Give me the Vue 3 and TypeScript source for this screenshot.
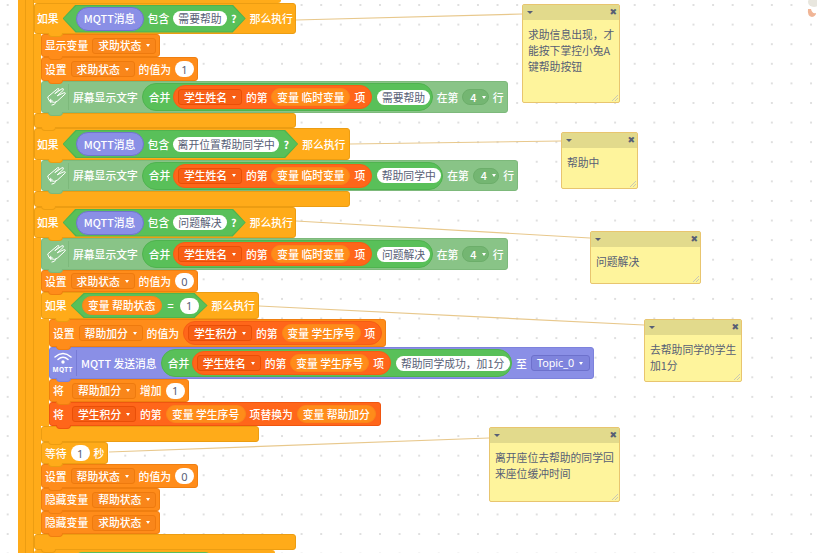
<script setup lang="ts">
interface Note {
  id: string
  lines: string[]
}
const notes: Note[] = [
  { id: 'n1', lines: ['求助信息出现，才', '能按下掌控小兔A', '键帮助按钮'] },
  { id: 'n2', lines: ['帮助中'] },
  { id: 'n3', lines: ['问题解决'] },
  { id: 'n4', lines: ['去帮助同学的学生', '加1分'] },
  { id: 'n5', lines: ['离开座位去帮助的同学回', '来座位缓冲时间'] },
]
const links = [
  [296, 20, 522, 14],
  [350, 144, 561, 141],
  [296, 221, 590, 238],
  [259, 306, 644, 325],
  [109, 452, 489, 438],
]
</script>

<template>
  <div class="canvas">
    <svg class="links" width="817" height="553">
      <line v-for="(l, i) in links" :key="i" :x1="l[0]" :y1="l[1]" :x2="l[2]" :y2="l[3]" />
    </svg>

    <div class="stack">
      <div class="arm outer"></div>
      <div class="arm outer"></div>
      <div class="col">
        <div class="foot prev"></div>

        <div class="b ctl head h31 w262">
          <span>如果</span>
          <div class="hex">
            <span class="pill mqtt">MQTT消息</span><span>包含</span>
            <span class="str w53">需要帮助</span><span class="q">?</span>
          </div>
          <span>那么执行</span>
        </div>
        <div class="body">
          <div class="arm"></div>
          <div class="kids">
            <div class="b var row h23"><span>显示变量</span><span class="dd v w64">求助状态<i></i></span></div>
            <div class="b var row h24"><span>设置</span><span class="dd v w64">求助状态<i></i></span><span>的值为</span><span class="num">1</span></div>
            <div class="b scr row h32">
              <svg class="comet" viewBox="1 0 18 18" width="20" height="20"><path d="M2.500 9 11.500 1.500Q13 1 12.500 2.500L9 6 15.500 1.500Q17 1 16.500 3L11 8 17.500 5Q19 5 18 6.500L11.500 12.500A5.500 5.500 0 0 1 2.500 9ZM3.500 12.500H7M5.250 10.700V14.300M6 16.300Q9 16.300 10 13.500"/></svg>
              <span class="sep"></span><span>屏幕显示文字</span>
              <div class="join">
                <span>合并</span>
                <div class="item">
                  <span class="dd l w64">学生姓名<i></i></span><span>的第</span><span class="vp w79">变量 临时变量</span><span>项</span>
                </div>
                <span class="str w53 end">需要帮助</span>
              </div>
              <span>在第</span><span class="dd g">4<i></i></span><span>行</span>
            </div>
          </div>
        </div>
        <div class="b ctl foot w262 h15"></div>

        <div class="b ctl head h32 w316">
          <span>如果</span>
          <div class="hex">
            <span class="pill mqtt">MQTT消息</span><span>包含</span>
            <span class="str w106">离开位置帮助同学中</span><span class="q">?</span>
          </div>
          <span>那么执行</span>
        </div>
        <div class="body">
          <div class="arm"></div>
          <div class="kids">
            <div class="b scr row h31">
              <svg class="comet" viewBox="1 0 18 18" width="20" height="20"><path d="M2.500 9 11.500 1.500Q13 1 12.500 2.500L9 6 15.500 1.500Q17 1 16.500 3L11 8 17.500 5Q19 5 18 6.500L11.500 12.500A5.500 5.500 0 0 1 2.500 9ZM3.500 12.500H7M5.250 10.700V14.300M6 16.300Q9 16.300 10 13.500"/></svg>
              <span class="sep"></span><span>屏幕显示文字</span>
              <div class="join">
                <span>合并</span>
                <div class="item">
                  <span class="dd l w64">学生姓名<i></i></span><span>的第</span><span class="vp w79">变量 临时变量</span><span>项</span>
                </div>
                <span class="str w64 end">帮助同学中</span>
              </div>
              <span>在第</span><span class="dd g">4<i></i></span><span>行</span>
            </div>
          </div>
        </div>
        <div class="b ctl foot w316 h16"></div>

        <div class="b ctl head h31 w262">
          <span>如果</span>
          <div class="hex">
            <span class="pill mqtt">MQTT消息</span><span>包含</span>
            <span class="str w53">问题解决</span><span class="q">?</span>
          </div>
          <span>那么执行</span>
        </div>
        <div class="body">
          <div class="arm"></div>
          <div class="kids">
            <div class="b scr row h32">
              <svg class="comet" viewBox="1 0 18 18" width="20" height="20"><path d="M2.500 9 11.500 1.500Q13 1 12.500 2.500L9 6 15.500 1.500Q17 1 16.500 3L11 8 17.500 5Q19 5 18 6.500L11.500 12.500A5.500 5.500 0 0 1 2.500 9ZM3.500 12.500H7M5.250 10.700V14.300M6 16.300Q9 16.300 10 13.500"/></svg>
              <span class="sep"></span><span>屏幕显示文字</span>
              <div class="join">
                <span>合并</span>
                <div class="item">
                  <span class="dd l w64">学生姓名<i></i></span><span>的第</span><span class="vp w79">变量 临时变量</span><span>项</span>
                </div>
                <span class="str w53 end">问题解决</span>
              </div>
              <span>在第</span><span class="dd g">4<i></i></span><span>行</span>
            </div>
            <div class="b var row h22"><span>设置</span><span class="dd v w64">求助状态<i></i></span><span>的值为</span><span class="num">0</span></div>

            <div class="b ctl row h27">
              <span>如果</span>
              <div class="hex small">
                <span class="vp w80 tall">变量 帮助状态</span><span class="eq">=</span><span class="num">1</span>
              </div>
              <span>那么执行</span>
            </div>
            <div class="body">
              <div class="arm inner"></div>
              <div class="kids">
                <div class="b var row h28">
                  <span>设置</span><span class="dd v w64">帮助加分<i></i></span><span>的值为</span>
                  <div class="item">
                    <span class="dd l w64">学生积分<i></i></span><span>的第</span><span class="vp w79">变量 学生序号</span><span>项</span>
                  </div>
                </div>
                <div class="b mq row h32">
                  <span class="wifi">
                    <svg viewBox="0 0 20 13" width="20" height="13"><path d="M2 5Q10-2 18 5M5 7.500Q10 3 15 7.500"/><circle cx="10" cy="10" r="1.700"/></svg>
                    <em>MQTT</em>
                  </span>
                  <span class="sep"></span><span class="label">MQTT 发送消息</span>
                  <div class="join">
                    <span>合并</span>
                    <div class="item">
                      <span class="dd l w64">学生姓名<i></i></span><span>的第</span><span class="vp w79">变量 学生序号</span><span>项</span>
                    </div>
                    <span class="str w114 end">帮助同学成功，加1分</span>
                  </div>
                  <span>至</span><span class="dd p">Topic_0<i></i></span>
                </div>
                <div class="b var row h23"><span class="jiang">将</span><span class="dd v w64">帮助加分<i></i></span><span>增加</span><span class="num">1</span></div>
                <div class="b lst row h24">
                  <span class="jiang">将</span><span class="dd l w64">学生积分<i></i></span><span>的第</span>
                  <span class="vp w80">变量 学生序号</span><span>项替换为</span><span class="vp w79 tail">变量 帮助加分</span>
                </div>
              </div>
            </div>
            <div class="b ctl foot w218 h16"></div>

            <div class="b ctl row h22"><span>等待</span><span class="num">1</span><span>秒</span></div>
            <div class="b var row h24"><span>设置</span><span class="dd v w64">帮助状态<i></i></span><span>的值为</span><span class="num">0</span></div>
            <div class="b var row h23"><span>隐藏变量</span><span class="dd v w64">帮助状态<i></i></span></div>
            <div class="b var row h23"><span>隐藏变量</span><span class="dd v w64">求助状态<i></i></span></div>
          </div>
        </div>
        <div class="b ctl foot w262 h16"></div>
        <div class="next"><span></span></div>
      </div>
    </div>

    <div v-for="n in notes" :key="n.id" class="note" :class="n.id">
      <div class="note-top"><i class="tri"></i><b>✖</b></div>
      <div class="note-text"><p v-for="t in n.lines" :key="t">{{ t }}</p></div>
      <svg class="grip" width="6" height="6" viewBox="0 0 6 6"><path d="M0 6 6 0M3 6 6 3"/></svg>
    </div>

    <svg class="mascot" width="10" height="18" viewBox="0 0 10 18">
      <ellipse cx="7" cy="2" rx="6" ry="5" fill="#e8e6de"/>
      <path d="M1 9Q0 16 5 17 9 16 9 13 5 14 4 9Z" fill="#f0b596"/>
    </svg>
  </div>
</template>

<style>
html, body { margin: 0; background: #fff; }
</style>

<style scoped>
.canvas {
  position: relative;
  width: 817px;
  height: 553px;
  overflow: hidden;
  font: 500 10.8px/1 "Noto Sans CJK SC", "Noto Sans", sans-serif;
  color: #fff;
  background-color: #fff;
  background-image: radial-gradient(circle, #dfdfdf 0.7px, transparent 1.1px);
  background-size: 19.6px 19.6px;
  background-position: -2.1px -4.8px;
}
.links { position: absolute; left: 0; top: 0; }
.links line { stroke: #e8c88c; stroke-width: 1.2; }

.stack { position: relative; display: flex; padding-left: 18px; height: 600px; }
.col { display: flex; flex-direction: column; align-items: flex-start; }
.kids { display: flex; flex-direction: column; align-items: flex-start; }
.body { display: flex; align-items: stretch; }
.arm { width: 7px; background: #ffab19; }
.arm.inner { width: 8px; }
.arm.outer { width: 8px; box-sizing: border-box; border-right: 1px solid #ec9d12; }

.b {
  position: relative;
  box-sizing: border-box;
  border: 1px solid;
  border-radius: 3px;
  flex: none;
}
.b::after {
  content: "";
  position: absolute;
  left: 6px;
  bottom: -4px;
  width: 15px;
  height: 4px;
  box-sizing: border-box;
  border: 1px solid;
  border-top: 0;
  border-radius: 0 0 4px 4px;
  border-color: inherit;
  background: inherit;
  z-index: 2;
}
.ctl { background: #ffab19; border-color: #ec9d12; }
.var { background: #ff8c1a; border-color: #f07f10; }
.lst { background: #ff661a; border-color: #f05510; }
.scr { background: #89c487; border-color: #7db97b; }
.mq { background: #8a8fe6; border-color: #7d82dc; }

.row, .head { display: flex; align-items: center; gap: 4px; padding: 0 3px; }
.head { padding: 0 2px; }
.head::after, .row.ctl.h27::after { left: 13px; }

.h15 { height: 15px; } .h16 { height: 16px; } .h22 { height: 22px; }
.h23 { height: 23px; } .h24 { height: 24px; } .h27 { height: 27px; }
.h28 { height: 28px; } .h31 { height: 31px; } .h32 { height: 32px; }
.foot { display: block; padding: 0; }
.w262 { width: 262px; } .w316 { width: 316px; } .w218 { width: 218px; }
.prev {
  width: 247px;
  height: 3px;
  background: #ffab19;
  border-radius: 0 0 3px 0;
}
.next {
  width: 241px;
  height: 20px;
  background: #ffab19;
  border-radius: 3px;
  padding: 2px 0 0 41px;
  box-sizing: border-box;
}
.next span { display: block; width: 137px; height: 14px; background: #59c059; border-radius: 7px 7px 0 0; }

.hex {
  position: relative;
  isolation: isolate;
  display: flex;
  align-items: center;
  gap: 4px;
  height: 28px;
  padding: 0 9px 0 13px;
}
.hex::before, .hex::after {
  content: "";
  position: absolute;
  z-index: -1;
  clip-path: polygon(13px 0, calc(100% - 13px) 0, 100% 50%, calc(100% - 13px) 100%, 13px 100%, 0 50%);
}
.hex::before { inset: 0; background: #4fb34f; }
.hex::after { inset: 1px; background: #59c059; }
.hex.small { height: 25px; padding: 0 9px 0 11px; gap: 6px; }
.eq { width: 6px; text-align: center; }
.q { width: 6px; font-weight: 700; text-align: center; }

.pill { display: flex; align-items: center; justify-content: center; box-sizing: border-box; }
.mqtt {
  width: 68px;
  height: 24px;
  border-radius: 12px;
  background: #8a8fe6;
  border: 1px solid #7074cc;
}
.str, .num {
  display: inline-flex;
  align-items: center;
  justify-content: center;
  background: #fff;
  color: #575e75;
  flex: none;
  font-weight: 400;
}
.str { height: 15px; border-radius: 8px; box-sizing: border-box; }
.w53 { width: 53.5px; } .w64 { width: 64px; } .w106 { width: 106px; } .w114 { width: 114px; }
.num { width: 19px; height: 16px; border-radius: 8px; font: 11px/1 "Noto Sans", sans-serif; }

.dd {
  display: inline-flex;
  align-items: center;
  box-sizing: border-box;
  height: 16px;
  padding-left: 5px;
  border: 1px solid;
  border-radius: 3px;
  flex: none;
  white-space: nowrap;
}
.dd i {
  width: 0;
  height: 0;
  margin-left: 5px;
  border-left: 2.5px solid transparent;
  border-right: 2.5px solid transparent;
  border-top: 3px solid #fff;
}
.dd.v { background: #f9861a; border-color: #ee7a0e; }
.dd.l { background: #f75f15; border-color: #e94f08; }
.dd.g { width: 26.5px; background: #74b672; border-color: #6cae6a; border-radius: 8px; padding-left: 7px; }
.dd.p { width: 59px; background: #7f84dd; border-color: #6d71cc; font: 10.8px/1 "Noto Sans", sans-serif; padding-left: 5px; }

.vp {
  display: inline-flex;
  align-items: center;
  justify-content: center;
  height: 18px;
  border-radius: 9px;
  background: #ff8c1a;
  border: 1px solid #fa861a;
  box-sizing: border-box;
  flex: none;
  white-space: nowrap;
}
.vp.tall { height: 19px; border-radius: 10px; }
.vp.tail { margin-right: 1px; }
.w79 { width: 79px; } .w80 { width: 80px; }

.join {
  display: flex;
  align-items: center;
  gap: 2.5px;
  height: 28px;
  box-sizing: border-box;
  padding: 0 1.5px 0 6px;
  background: #59c059;
  border: 1px solid #4fb34f;
  border-radius: 14px;
  flex: none;
}
.item {
  display: flex;
  align-items: center;
  gap: 4px;
  height: 24px;
  box-sizing: border-box;
  padding: 0 6px 0 4px;
  background: #ff661a;
  border: 1px solid #f65d14;
  border-radius: 12px;
  flex: none;
}
.end { margin-left: 2px; }
.jiang { width: 11px; margin-right: 4px; }

.comet { margin-left: 1px; flex: none; }
.comet path { fill: none; stroke: #fff; stroke-width: 0.9; stroke-linejoin: round; }
.sep { width: 1px; height: 26px; background: #7db97b; flex: none; margin-left: -2px; }
.mq { padding-left: 2px; }
.mq .sep { background: #777bd6; margin-left: -1px; }
.wifi { display: flex; flex-direction: column; align-items: center; width: 21px; flex: none; }
.wifi svg path { fill: none; stroke: #fff; stroke-width: 1.5; stroke-linecap: round; }
.wifi svg circle { fill: #fff; }
.wifi em { font: 700 6.5px/1 "Noto Sans", sans-serif; letter-spacing: 0.3px; margin-top: 2px; }

.note {
  position: absolute;
  box-sizing: border-box;
  background: #fef49c;
  border: 1px solid #e8c56f;
  border-radius: 2px;
  color: #575e75;
  font-weight: 400;
}
.note-top {
  display: flex;
  align-items: center;
  justify-content: space-between;
  height: 15px;
  padding: 0 2px 0 4px;
  background: #e2da8c;
}
.tri { border-left: 3px solid transparent; border-right: 3px solid transparent; border-top: 3px solid #575e75; }
.note-top b { font: 700 9px/1 "DejaVu Sans", sans-serif; }
.note-text { padding: 6px 5px 0; }
.note-text p { margin: 0; line-height: 16px; white-space: nowrap; }
.grip { position: absolute; right: 1px; bottom: 1px; }
.grip path { stroke: #bbb; stroke-width: 0.8; fill: none; }
.n1 { left: 522px; top: 4px; width: 98px; height: 99px; }
.n2 { left: 561px; top: 132px; width: 77px; height: 57px; }
.n3 { left: 590px; top: 231px; width: 111px; height: 53px; }
.n4 { left: 644px; top: 319px; width: 98px; height: 63px; }
.n5 { left: 489px; top: 427px; width: 131px; height: 75px; }
.mascot { position: absolute; left: 807px; top: 0; }
</style>
